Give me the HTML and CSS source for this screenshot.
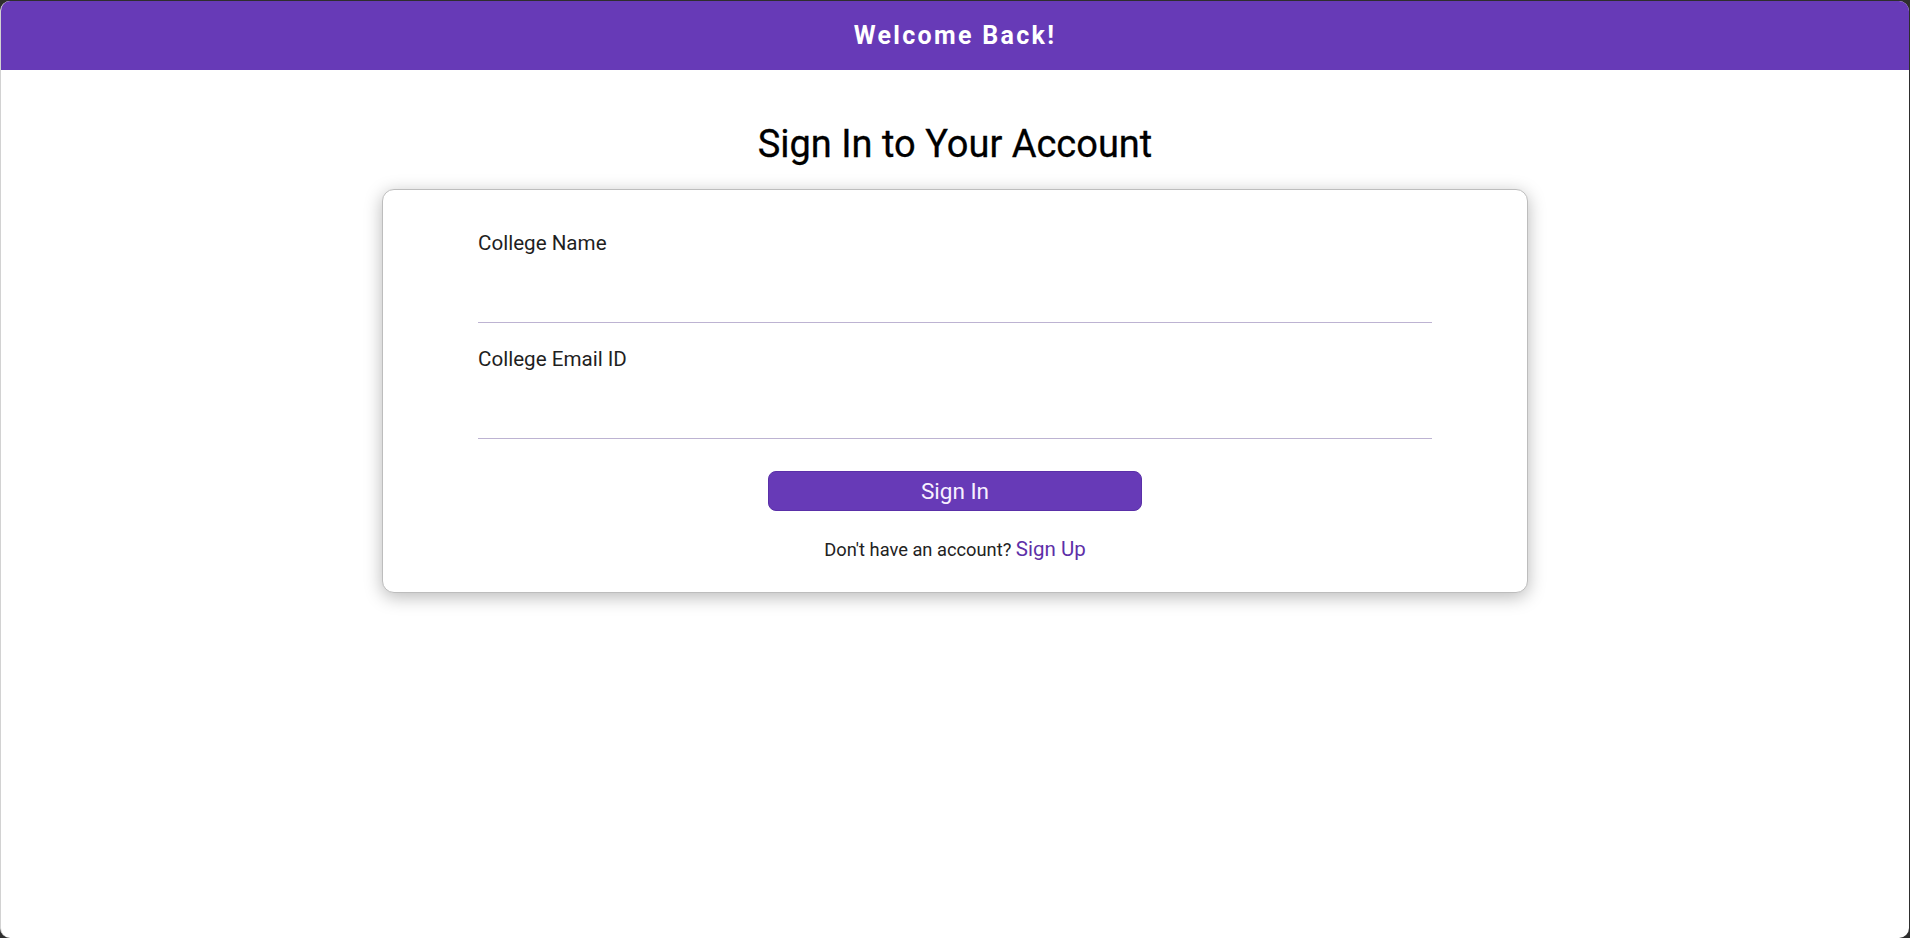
FILE: index.html
```html
<!DOCTYPE html>
<html lang="en">
<head>
<meta charset="utf-8">
<title>Sign In</title>
<link rel="stylesheet" href="styles.css">
</head>
<body>
<div class="app">
  <header class="topbar">
    <span class="topbar-title">Welcome Back!</span>
  </header>
  <main class="content">
    <h1 class="page-title">Sign In to Your Account</h1>
    <div class="card">
      <form class="form">
        <div class="field">
          <label class="field-label" for="college">College Name</label>
          <input class="field-input" id="college" type="text">
        </div>
        <div class="field">
          <label class="field-label" for="email">College Email ID</label>
          <input class="field-input" id="email" type="email">
        </div>
        <button class="btn" type="button">Sign In</button>
        <p class="signup">Don't have an account? <a class="signup-link" href="#">Sign Up</a></p>
      </form>
    </div>
  </main>
</div>
</body>
</html>
```

FILE: styles.css
```css
* { box-sizing: border-box; }
html, body { height: 100%; }
body {
  margin: 0;
  background: #2e2e2e;
  font-family: Roboto, "Liberation Sans", Arial, sans-serif;
}
.app {
  margin: 1px 1px 0 0;
  height: calc(100vh - 1px);
  background: #ffffff;
  border-left: 1px solid #d2d2d2;
  border-radius: 10px;
  overflow: hidden;
  display: flex;
  flex-direction: column;
}
.topbar {
  height: 69px;
  background: #673ab7;
  display: flex;
  align-items: center;
  justify-content: center;
  flex-shrink: 0;
}
.topbar-title {
  color: #ffffff;
  font-size: 25px;
  font-weight: 700;
  letter-spacing: 2.3px;
}
.content {
  display: flex;
  flex-direction: column;
  align-items: center;
  padding-top: 52px;
}
.page-title {
  margin: 0 0 23px;
  font-size: 38px;
  font-weight: 400;
  line-height: 44px;
  color: #000;
  -webkit-text-stroke: 0.3px #000;
}
.card {
  width: 1146px;
  background: #fff;
  border: 1px solid #bdbdbd;
  border-radius: 12px;
  box-shadow: 0 4px 18px rgba(0, 0, 0, 0.28);
  padding: 41px 95px 30px;
}
.form {
  display: flex;
  flex-direction: column;
  align-items: center;
}
.field {
  width: 100%;
  display: flex;
  flex-direction: column;
  margin-bottom: 24px;
}
.field-label {
  font-size: 20.6px;
  line-height: 24px;
  color: #1f1f1f;
}
.field-input {
  height: 68px;
  border: none;
  border-bottom: 1px solid #bdb3d2;
  outline: none;
  font-size: 20px;
  font-family: inherit;
  background: transparent;
}
.btn {
  margin-top: 8px;
  width: 374px;
  height: 40px;
  background: #673ab7;
  border: 1px solid #5a30a8;
  border-radius: 8px;
  color: #f7f0ff;
  font-family: inherit;
  font-size: 22.5px;
  cursor: pointer;
}
.signup {
  margin: 26px 0 0;
  font-size: 18.3px;
  line-height: 24px;
  color: #222;
}
.signup-link {
  color: #5e2fa8;
  font-size: 20.5px;
  text-decoration: none;
}
```
